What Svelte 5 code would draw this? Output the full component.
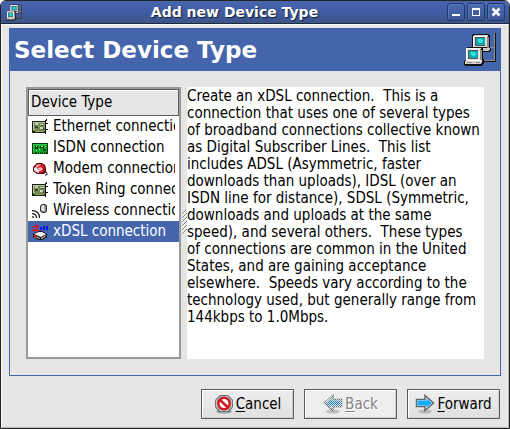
<script>
  const description =
    'Create an xDSL connection.  This is a connection that uses one of several types of broadband connections collective known as Digital Subscriber Lines.  This list includes ADSL (Asymmetric, faster downloads than uploads), IDSL (over an ISDN line for distance), SDSL (Symmetric, downloads and uploads at the same speed), and several others.  These types of\u00a0connections are common in the United States, and are gaining acceptance elsewhere.  Speeds vary according to the technology used, but generally range from 144kbps to 1.0Mbps.';

  const devices = [
    { name: 'Ethernet connection', icon: 'card' },
    { name: 'ISDN connection', icon: 'isdn' },
    { name: 'Modem connection', icon: 'modem' },
    { name: 'Token Ring connection', icon: 'card' },
    { name: 'Wireless connection', icon: 'wireless' },
    { name: 'xDSL connection', icon: 'xdsl' }
  ];
  let selected = $state('xDSL connection');
</script>

{#snippet computer()}
  <path d="M9 1h15l2 2v11l1 1v2l-2 2H12l-2-2v-2l-2-1V2z" fill="#111" />
  <path d="M10 2h13l1 1v11H9V3z" fill="#dcdad8" />
  <path d="M23 3l2 1v11l-2 2z" fill="#8d8988" />
  <path d="M9 3h14v1H10v10H9z" fill="#fff" />
  <path d="M11 4h10v9H11z" fill="#555" />
  <path d="M12 5h9v7h-9z" fill="#10a9ae" />
  <path d="M14 6h4v1h1v2h-1v1h-3v-1h-1z" fill="#31e2df" />
  <path d="M19 15h7v1l-2 2h-5z" fill="#c7c3c1" />
  <path d="M31 0v28h-11" fill="none" stroke="#111" stroke-width="2" />
  <path d="M30.500 0v27.500H19M26 14.500h4" fill="none" stroke="#8b8b8b" />
  <path d="M3 14h14l2 2v10l1 1v3l-3 3H1l-1-1v-4l2-2V15z" fill="#111" />
  <path d="M3 15h13l1 1v11H2V16z" fill="#e6e3e1" />
  <path d="M16 16l2 1v10l-2 1z" fill="#8d8988" />
  <path d="M2 15h14v1H3v11H2z" fill="#fff" />
  <path d="M4 17h10v9H4z" fill="#555" />
  <path d="M5 18h9v7H5z" fill="#10a9ae" />
  <path d="M7 19h4v1h1v2h-1v1H8v-1H7z" fill="#31e2df" />
  <path d="M2 27h16v2l-2 2H1v-3z" fill="#d3cfcd" />
  <path d="M2 27h15v1H2z" fill="#fff" />
  <path d="M3 29h5v1H3zM12 29h4v1h-4z" fill="#8b8786" />
{/snippet}

{#snippet deviceIcon(kind)}
  <svg class="device" viewBox="0 0 16 16" aria-hidden="true">
    {#if kind === 'card'}
      <path d="M0 2h14v12H0z" fill="#172412" />
      <path d="M1 3h12v9H1z" fill="#6f8658" />
      <path d="M1 3h12v1H1zM1 4h1v7H1z" fill="#b3c49e" />
      <path d="M3 4h3v2H3zM8 5h4v1H8zM8 8h3v2H8z" fill="#c9d4ae" />
      <path d="M3 7h3v2H3zM9 6h2v1H9zM11 9h1v2h-1z" fill="#34472b" />
      <path d="M2 10h1v1H2zM6 7h1v1H6z" fill="#d9c64c" />
      <path d="M3 12h9v1H3z" fill="#a99d4a" />
      <path d="M13 1h1v14h-1zM14 0h1v2h-1zM14 4h2v1h-2zM14 10h2v1h-2z" fill="#111" />
    {:else if kind === 'isdn'}
      <path d="M0 3h16v11H0z" fill="#063e0b" />
      <path d="M1 4h14v8H1z" fill="#11a629" />
      <path d="M1 4h14v1H1zM1 5h1v7H1z" fill="#35c944" />
      <path d="M3 6h3v3H3zM8 6h4v2H8zM11 9h3v2h-3z" fill="#083b11" />
      <path d="M4 6h1v1H4zM9 6h2v1H9zM7 9h1v1H7zM4 10h1v1H4zM13 6h1v1h-1z" fill="#c4f0bd" />
      <path d="M1 12h2v1H1zM5 12h1v2H5zM7 12h1v2H7zM9 12h1v2H9zM11 12h1v2h-1zM13 12h1v1h-1z" fill="#17b02e" />
    {:else if kind === 'modem'}
      <path d="M5 2h5l3 2 1 3v4l-2 2H5l-4-3V6l2-2z" fill="#4a080d" />
      <path d="M5.500 3H10l2.500 2 .5 3-1 3-2 1H5.500L2 9.500V6.500L4 4z" fill="#e01624" />
      <path d="M5 3.500h4L7 5 5 6.500H3.500z" fill="#ffb3b7" />
      <path d="M2 7l2-1 3 3v3l-2-.5L2 9.500z" fill="#efdfe0" />
      <path d="M6 7l3-1 2 2-2 2H7z" fill="#fbb7bd" />
      <path d="M9.500 5l2 2v3" fill="none" stroke="#8f0a12" />
      <path d="M12 11h2l1 1v2h-2" fill="none" stroke="#222" />
    {:else if kind === 'wireless'}
      <path d="M10 1h3l2 1.500v6L13 10h-3L8 8V3z" fill="#333" />
      <path d="M10.500 2h2L14 3v5l-1.500 1h-2L9 7.500v-4z" fill="#999" />
      <path d="M9.500 3L11 2h1v6h-1L9.500 7z" fill="#f0f0f0" />
      <path d="M0 7.500q7.500 0 7.500 7.500M0 10.500q4.500 0 4.500 4.500M0 13.500q1.500 0 1.500 1.500" fill="none" stroke="#222" stroke-width="1.250" />
    {:else}
      <path d="M0 2h4V0l3 2.500L4 5V3H0zM7 5.500H3V4L0 6l3 2.500V7h4z" fill="#f00b16" />
      <path d="M8 3h2v3H8zM11 2h2v4h-2zM14 2h2v4h-2z" fill="#0715f4" />
      <path d="M7 7h3l5 3v3l-5 3H7l-6-3v-3z" fill="#111" />
      <path d="M7 8h3l4 2-5 3-7-3z" fill="#f2f2f2" />
      <path d="M2 11l6 3v1l-6-2zM9 14l5-3v1l-4 3H9z" fill="#b8b4b1" />
      <path d="M2 10.500l3 1.500v2l-3-1z" fill="#e31b23" />
    {/if}
  </svg>
{/snippet}

{#snippet arrow(fill)}
  <ellipse cx="10" cy="17.500" rx="7" ry="2" fill="#888" opacity=".45" />
  <path d="M1.500 5.500H10V1.500L18.500 9 10 16.500v-4H1.500z" fill="#f7fbfd" stroke="#5f696e" stroke-width="1.500" />
  <path d="M2.500 6.500h9V4.500L17 9l-5.500 4.500v-2h-9z" {fill} />
{/snippet}

<div class="window">
  <header class="titlebar">
    <svg class="app-icon" viewBox="0 0 32 34" aria-hidden="true">{@render computer()}</svg>
    <h1>Add new Device Type</h1>
    <div class="controls">
      <button aria-label="Minimize"><svg viewBox="0 0 16 16"><path d="M4 10h8v2H4z" fill="#fff" /></svg></button>
      <button aria-label="Maximize"><svg viewBox="0 0 16 16"><path d="M4 4h8v8H4zM5 6v5h6V6z" fill="#fff" fill-rule="evenodd" /></svg></button>
      <button aria-label="Close"><svg viewBox="0 0 16 16"><path d="M4.500 4.500l7 7m0-7l-7 7" stroke="#fff" stroke-width="2.500" /></svg></button>
    </div>
  </header>

  <main>
    <section class="page">
      <div class="banner">
        <h2>Select Device Type</h2>
        <svg viewBox="0 0 32 34" shape-rendering="crispEdges" aria-hidden="true">{@render computer()}</svg>
      </div>
      <div class="panes">
        <div class="list">
          <button class="column">Device Type</button>
          <div role="listbox" aria-label="Device Type">
            {#each devices as device}
              <button
                class="row"
                class:selected={selected === device.name}
                role="option"
                aria-selected={selected === device.name}
                onclick={() => (selected = device.name)}
              >
                {@render deviceIcon(device.icon)}
                <span>{device.name}</span>
              </button>
            {/each}
          </div>
        </div>
        <div class="grip">
          <svg viewBox="0 0 5 26" aria-hidden="true">
            {#each [4, 8, 12, 16, 20, 24] as y}
              <path d="M0 {y}l5-5" stroke="#888" />
              <path d="M0 {y + 1}l5-5" stroke="#fff" />
            {/each}
          </svg>
        </div>
        <p class="description">{description}</p>
      </div>
    </section>

    <footer>
      <button class="action">
        <svg viewBox="0 0 20 20" aria-hidden="true">
          <ellipse cx="10" cy="17.500" rx="8" ry="2" fill="#777" opacity=".6" />
          <path d="M6 1h8l5 5v7l-4 5H5l-4-5V6z" fill="#68747b" />
          <path d="M6.500 2h7L18 6.500v6L14 17H6l-4-4.500v-6z" fill="#c3cacd" />
          <circle cx="10" cy="9.500" r="7" fill="#d31920" />
          <circle cx="10" cy="9.500" r="4.500" fill="#fff" />
          <path d="M5.500 5.500l9 8.500" stroke="#d31920" stroke-width="2.500" />
        </svg>
        <span><u>C</u>ancel</span>
      </button>
      <button class="action" disabled>
        <svg viewBox="0 0 20 20" aria-hidden="true">
          <defs>
            <pattern id="stipple" width="2" height="2" patternUnits="userSpaceOnUse">
              <path d="M0 0h1v1H0zM1 1h1v1H1z" fill="#ddd" shape-rendering="crispEdges" />
            </pattern>
            <clipPath id="back-shape">
              <path d="M19.500 4.500H11V0L0 9l11 9v-4.500h8.500z" />
            </clipPath>
          </defs>
          <g transform="translate(20 0) scale(-1 1)">{@render arrow('#1080b8')}</g>
          <path d="M0 0h20v20H0z" fill="url(#stipple)" clip-path="url(#back-shape)" />
        </svg>
        <span><u>B</u>ack</span>
      </button>
      <button class="action">
        <svg viewBox="0 0 20 20" aria-hidden="true">{@render arrow('#16aafa')}</svg>
        <span><u>F</u>orward</span>
      </button>
    </footer>
  </main>
</div>

<style>
  :global(body) {
    margin: 0;
    background: #fff;
  }
  .window {
    box-sizing: border-box;
    min-height: 100vh;
    display: flex;
    flex-direction: column;
    border: 1px solid #222;
    border-radius: 6px 6px 0 0;
    background: #e6e6e6;
    color: #000;
    font: 15px/17px 'DejaVu Sans Condensed', 'DejaVu Sans', sans-serif;
    overflow: hidden;
  }
  button {
    font: inherit;
    color: inherit;
    margin: 0;
    padding: 0;
    border: 0;
    background: none;
  }
  svg {
    display: block;
    flex: none;
  }
  h1, h2, p {
    margin: 0;
  }
  .titlebar {
    box-sizing: border-box;
    height: 23px;
    display: flex;
    align-items: center;
    padding: 0 4px 0 5px;
    border-bottom: 1px solid #20283c;
    background: linear-gradient(#4865ad, #405da5 45%, #3d5487);
  }
  .app-icon {
    width: 16px;
    height: 17px;
  }
  h1 {
    flex: 1;
    text-align: center;
    color: #fff;
    font: bold 14px/17px 'DejaVu Sans', sans-serif;
    text-shadow: 1px 1px 1px #111b38;
  }
  .controls {
    display: flex;
    gap: 2px;
  }
  .controls button {
    box-sizing: border-box;
    width: 18px;
    height: 18px;
    border: 1px solid #1f386f;
    border-radius: 3px;
    background: linear-gradient(#4b6bb2, #3b5691);
    box-shadow: inset 1px 1px #5878bd;
  }
  .controls svg {
    width: 16px;
    height: 16px;
  }
  main {
    flex: 1;
    display: flex;
    flex-direction: column;
    padding: 3px 7px 8px;
    border: 1px solid #f8f8f8;
    border-right-color: #bbb;
    border-bottom-color: #bbb;
  }
  .page {
    flex: 1;
    display: flex;
    flex-direction: column;
    border: 1px solid #4464ac;
  }
  .banner {
    display: flex;
    align-items: center;
    justify-content: space-between;
    height: 42px;
    padding: 0 4px;
    background: #4464ac;
    color: #fff;
  }
  .banner svg {
    width: 32px;
    height: 34px;
  }
  h2 {
    font: bold 23px/28px 'DejaVu Sans', sans-serif;
  }
  .panes {
    flex: 1;
    display: flex;
    padding: 16px;
  }
  .list {
    box-sizing: border-box;
    flex: none;
    width: 155px;
    border: 2px solid #999;
    background: #fff;
  }
  .column {
    box-sizing: border-box;
    display: block;
    width: 100%;
    height: 27px;
    padding: 0 2px;
    border: 1px solid #5c5c5c;
    background: #e6e6e6;
    box-shadow: inset 1px 1px #fff;
    text-align: left;
  }
  .row {
    display: flex;
    align-items: center;
    gap: 5px;
    width: 100%;
    height: 21px;
    padding: 0 4px;
    text-align: left;
  }
  .row span {
    overflow: hidden;
    white-space: nowrap;
  }
  .selected {
    background: #4464ac;
    color: #fff;
  }
  .device {
    width: 16px;
    height: 16px;
  }
  .grip {
    flex: none;
    display: flex;
    align-items: center;
    justify-content: center;
    width: 6px;
  }
  .grip svg {
    width: 5px;
    height: 26px;
  }
  .description {
    flex: 1;
    padding-top: 1px;
    background: #fff;
    white-space: pre-wrap;
  }
  footer {
    display: flex;
    justify-content: flex-end;
    gap: 10px;
    padding: 13px 1px 0 0;
  }
  .action {
    box-sizing: border-box;
    display: flex;
    align-items: center;
    justify-content: center;
    gap: 2px;
    width: 93px;
    height: 30px;
    border: 1px solid #5c5c5c;
    background: linear-gradient(#eee, #e0e0e0);
    box-shadow: inset 1px 1px #fff, inset -1px -1px #ccc;
  }
  .action svg {
    width: 20px;
    height: 20px;
  }
  .action u {
    text-underline-offset: 2px;
  }
  .action:disabled {
    background: #eee;
    color: #858585;
    text-shadow: 1px 1px #fff;
  }
</style>
